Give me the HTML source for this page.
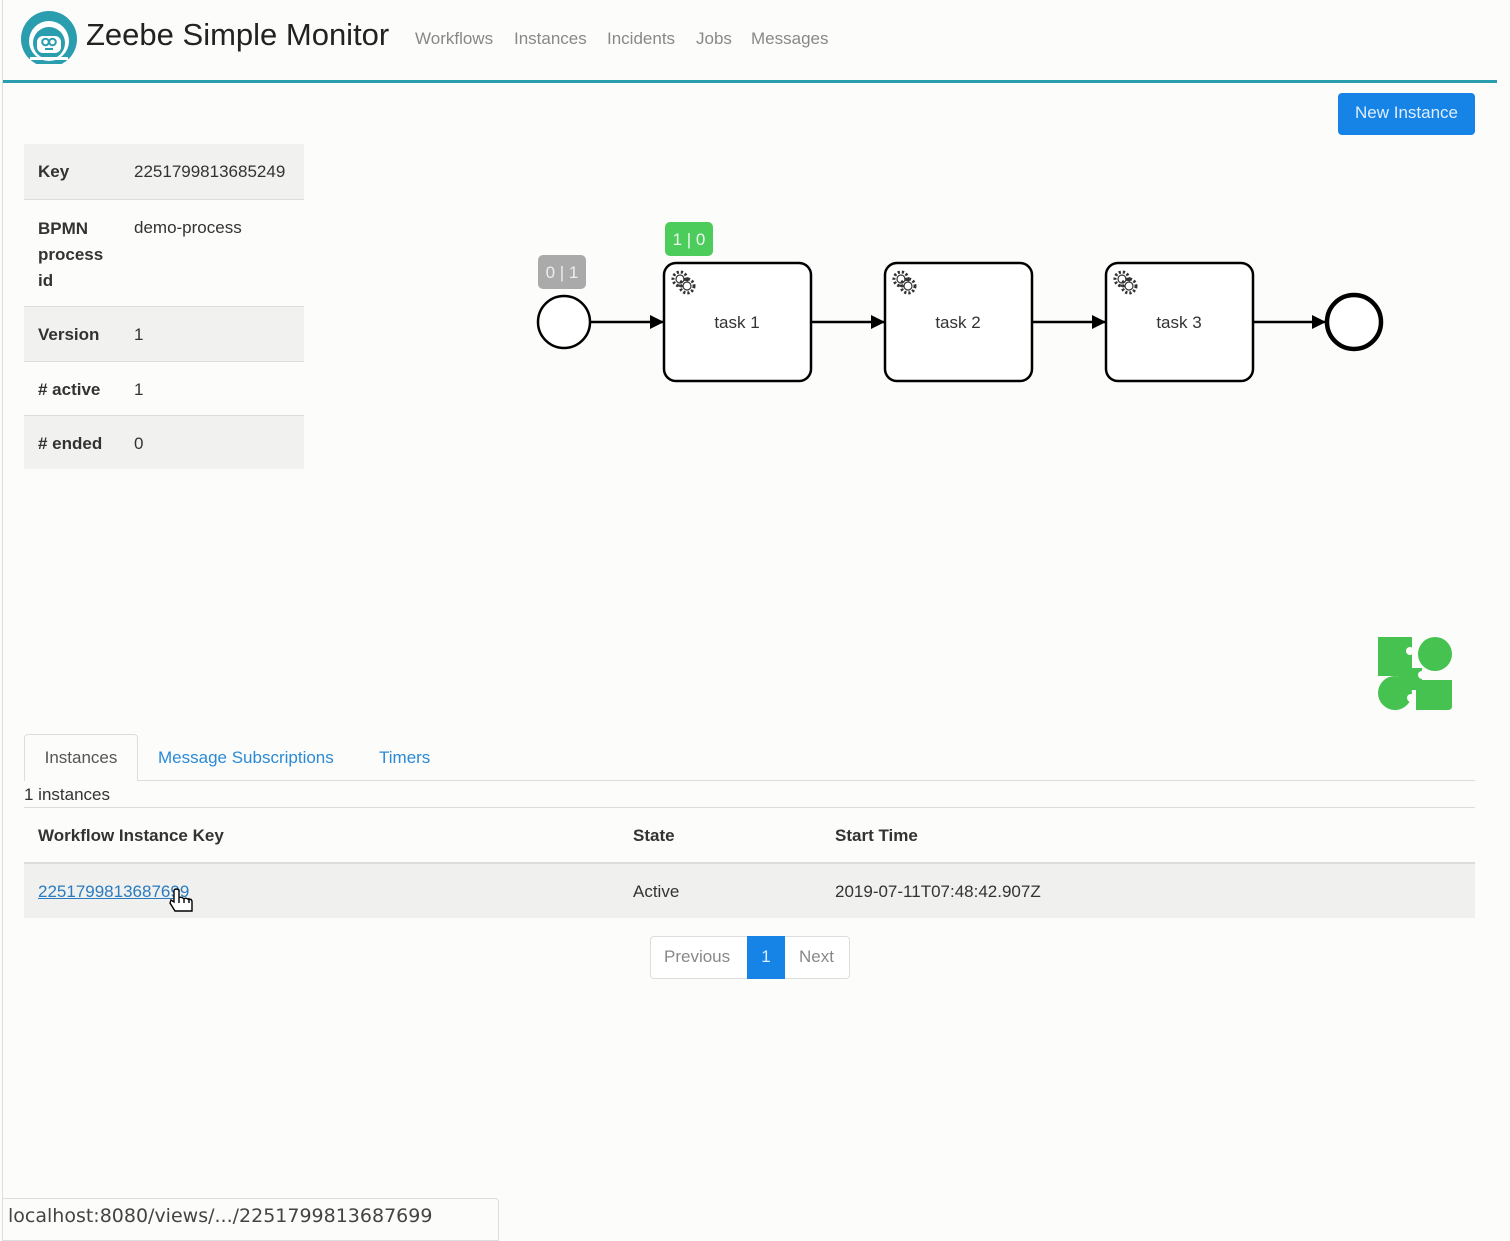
<!DOCTYPE html>
<html><head><meta charset="utf-8"><style>
*{box-sizing:border-box;margin:0;padding:0}
body{width:1510px;height:1241px;background:#fcfcfa;font-family:"Liberation Sans",sans-serif;color:#333;position:relative;overflow:hidden;font-size:17px}
.a{position:absolute}
.lb{border-left:1px solid #ddd;position:absolute;left:2px;top:0;bottom:0}
.nav{color:#888;font-size:17px;top:29px}
.row{position:absolute;left:24px;width:280px}
.row b{position:absolute;left:14px}
.row span{position:absolute;left:110px}
.g{background:#f1f1f0}
</style></head><body>
<div class="lb"></div>
<svg class="a" style="left:18px;top:10px" width="62" height="58" viewBox="0 0 62 58">
<defs><clipPath id="c"><rect x="0" y="0" width="62" height="54"/></clipPath></defs>
<g clip-path="url(#c)">
<circle cx="31" cy="29" r="28" fill="#2a9dae"/>
<circle cx="31" cy="31" r="20" fill="#fff"/>
<circle cx="31" cy="33" r="16" fill="#2a9dae"/>
<rect x="12" y="47" width="38" height="3" fill="#fff"/>
</g>
<rect x="19" y="26" width="24" height="17" rx="6" fill="#fff"/>
<circle cx="27.5" cy="32" r="3.3" fill="none" stroke="#2a9dae" stroke-width="2"/>
<circle cx="34.5" cy="32" r="3.3" fill="none" stroke="#2a9dae" stroke-width="2"/>
<rect x="27" y="38" width="8" height="2" fill="#2a9dae"/>
</svg>
<div class="a" style="left:86px;top:17px;font-size:31px;color:#222">Zeebe Simple Monitor</div>
<div class="a nav" style="left:415px">Workflows</div>
<div class="a nav" style="left:514px">Instances</div>
<div class="a nav" style="left:607px">Incidents</div>
<div class="a nav" style="left:696px">Jobs</div>
<div class="a nav" style="left:751px">Messages</div>
<div class="a" style="left:3px;top:80px;width:1494px;height:3px;background:#2a9dae"></div>
<div class="a" style="left:1338px;top:93px;width:137px;height:42px;background:#1683e6;border-radius:4px;color:#dfeeff;font-size:17px;text-align:center;line-height:40px">New Instance</div>

<div class="row g" style="top:144px;height:55px"><b style="top:18px">Key</b><span style="top:18px">2251799813685249</span></div>
<div class="row" style="top:199px;height:107px;border-top:1px solid #ddd"><b style="top:16px;line-height:26px">BPMN<br>process<br>id</b><span style="top:18px">demo-process</span></div>
<div class="row g" style="top:306px;height:55px;border-top:1px solid #ddd"><b style="top:18px">Version</b><span style="top:18px">1</span></div>
<div class="row" style="top:361px;height:54px;border-top:1px solid #ddd"><b style="top:18px"># active</b><span style="top:18px">1</span></div>
<div class="row g" style="top:415px;height:54px;border-top:1px solid #ddd"><b style="top:18px"># ended</b><span style="top:18px">0</span></div>

<svg class="a" style="left:0;top:0" width="1510" height="720">
<defs><marker id="m" markerWidth="14" markerHeight="14" refX="13" refY="7" orient="auto" markerUnits="userSpaceOnUse"><path d="M0 0 L14 7 L0 14 Z" fill="#000"/></marker>
<g id="gear"><circle r="7" fill="none" stroke="#333" stroke-width="3" stroke-dasharray="2.2 2"/><circle r="4" fill="#fff" stroke="#333" stroke-width="1.2"/></g></defs>
<g stroke="#000" stroke-width="2.5" fill="none">
<line x1="591" y1="322" x2="663" y2="322" marker-end="url(#m)"/>
<line x1="812" y1="322" x2="884" y2="322" marker-end="url(#m)"/>
<line x1="1033" y1="322" x2="1105" y2="322" marker-end="url(#m)"/>
<line x1="1254" y1="322" x2="1325" y2="322" marker-end="url(#m)"/>
<circle cx="564" cy="322" r="26" fill="#fff"/>
<circle cx="1354" cy="322" r="27" stroke-width="4.5" fill="#fff"/>
<rect x="664" y="263" width="147" height="118" rx="12" fill="#fff"/>
<rect x="885" y="263" width="147" height="118" rx="12" fill="#fff"/>
<rect x="1106" y="263" width="147" height="118" rx="12" fill="#fff"/>
</g>
<use href="#gear" x="680" y="279"/><use href="#gear" x="687" y="286"/>
<use href="#gear" x="901" y="279"/><use href="#gear" x="908" y="286"/>
<use href="#gear" x="1122" y="279"/><use href="#gear" x="1129" y="286"/>
<g font-family="Liberation Sans" font-size="17" fill="#333" text-anchor="middle">
<text x="737" y="328">task 1</text><text x="958" y="328">task 2</text><text x="1179" y="328">task 3</text></g>
<rect x="538" y="255" width="48" height="34" rx="5" fill="#aaa"/>
<text x="562" y="278" font-family="Liberation Sans" font-size="17" fill="#eee" text-anchor="middle">0 | 1</text>
<rect x="665" y="222" width="48" height="34" rx="5" fill="#4bcc5b"/>
<text x="689" y="245" font-family="Liberation Sans" font-size="17" fill="#eefaef" text-anchor="middle">1 | 0</text>
<g fill="#45c24f">
<path d="M1378 637 H1412 V668 H1422 V680 H1452 V706 Q1452 710 1448 710 H1416 V690 H1398 V676 H1378 Z"/>
<circle cx="1435" cy="654" r="17"/><circle cx="1395" cy="693" r="17"/>
</g>
<g fill="#fcfcfa"><circle cx="1410" cy="651" r="4"/><circle cx="1422" cy="675" r="4"/><circle cx="1411" cy="698" r="4"/></g>
</svg>

<div class="a" style="left:24px;top:734px;width:114px;height:47px;border:1px solid #ddd;border-bottom:none;border-radius:4px 4px 0 0;background:#fcfcfa;color:#555;text-align:center;line-height:46px">Instances</div>
<div class="a" style="left:138px;top:780px;width:1337px;height:1px;background:#ddd"></div>
<div class="a" style="left:158px;top:748px;color:#2a8ad6">Message Subscriptions</div>
<div class="a" style="left:379px;top:748px;color:#2a8ad6">Timers</div>
<div class="a" style="left:24px;top:785px">1 instances</div>
<div class="a" style="left:24px;top:807px;width:1451px;height:1px;background:#ddd"></div>
<div class="a" style="left:38px;top:826px;font-weight:bold">Workflow Instance Key</div>
<div class="a" style="left:633px;top:826px;font-weight:bold">State</div>
<div class="a" style="left:835px;top:826px;font-weight:bold">Start Time</div>
<div class="a" style="left:24px;top:862px;width:1451px;height:56px;background:#f0f0ef;border-top:2px solid #ddd"></div>
<div class="a" style="left:38px;top:882px;color:#2a7bbf;text-decoration:underline">2251799813687699</div>
<div class="a" style="left:633px;top:882px">Active</div>
<div class="a" style="left:835px;top:882px">2019-07-11T07:48:42.907Z</div>
<svg class="a" style="left:168px;top:888px" width="28" height="28"><path d="M6 2 V14 L3 12 L2 15 L7 23 H24 V14 Q24 11 21 11 V15 M21 12 Q18 9 16 11 V15 M16 11 Q13 8 11 10 V15 M11 10 V2 Q8 0 6 2" fill="#fff" stroke="#000" stroke-width="1.4"/></svg>
<div class="a" style="left:650px;top:936px;width:200px;height:43px;border:1px solid #ddd;border-radius:4px;background:#fff"></div>
<div class="a" style="left:664px;top:947px;color:#888">Previous</div>
<div class="a" style="left:747px;top:936px;width:38px;height:43px;background:#1683e6;color:#dfeeff;text-align:center;line-height:42px">1</div>
<div class="a" style="left:799px;top:947px;color:#888">Next</div>
<div class="a" style="left:2px;top:1198px;width:497px;height:43px;border:1px solid #ddd;border-radius:0 4px 0 0;background:#fcfcfa;font-family:'DejaVu Sans',sans-serif;font-size:19px;color:#444;padding:6px 0 0 5px">localhost:8080/views/.../2251799813687699</div>
</body></html>
